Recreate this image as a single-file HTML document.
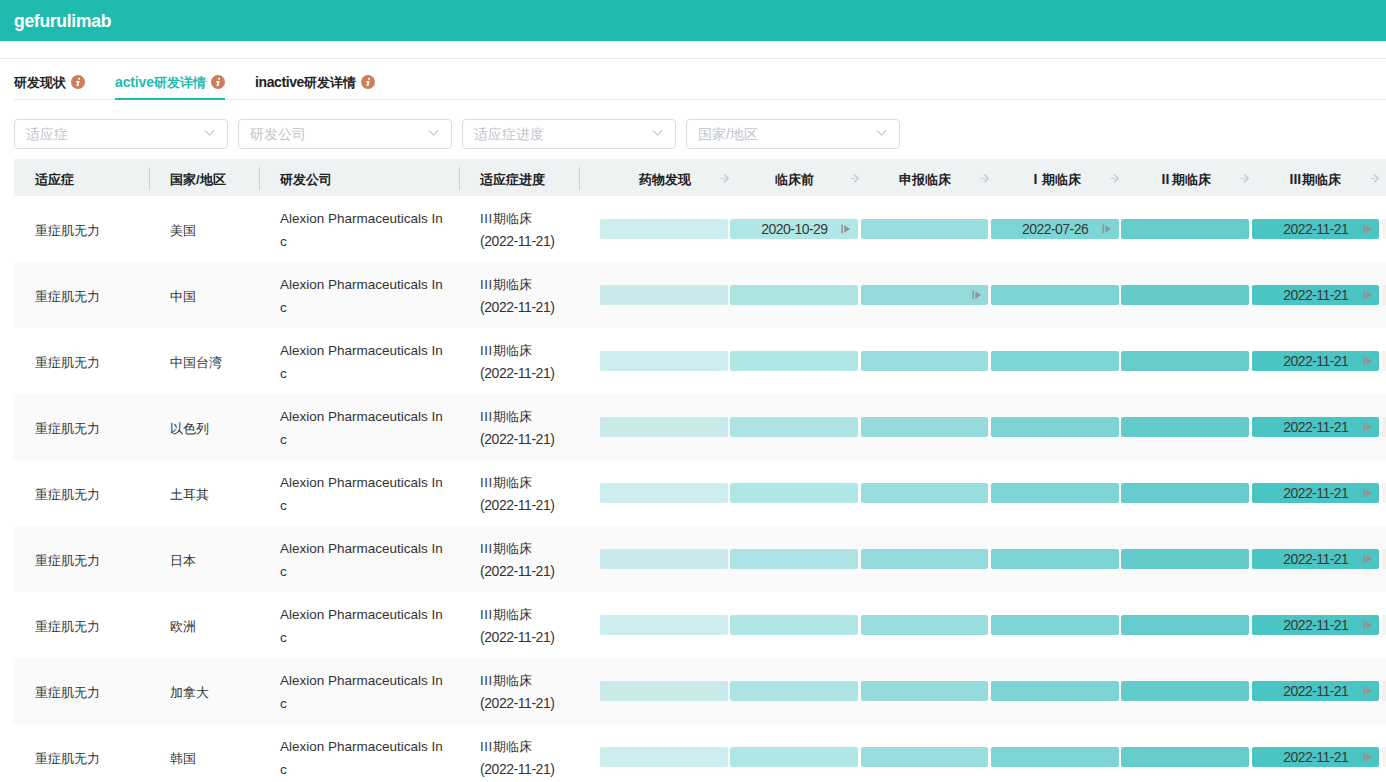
<!DOCTYPE html>
<html><head><meta charset="utf-8"><style>
*{box-sizing:border-box;margin:0;padding:0}
html,body{width:1386px;height:782px;overflow:hidden;background:#fff;font-family:"Liberation Sans",sans-serif;color:#333}
body{position:relative}
.a{position:absolute}
#hdr{left:0;top:0;width:1386px;height:41px;background:#1fbbae}
#ttl{position:absolute;left:14px;top:9px;letter-spacing:-0.28px;font-size:17.5px;font-weight:bold;color:#fff;line-height:24px;white-space:nowrap}
#l1{left:0;top:58px;width:1386px;height:1px;background:#e8e8e8}
#l2{left:14px;top:99px;width:1372px;height:1px;background:#e4e7ed}
.tab{position:absolute;top:74px;font-size:13px;font-weight:bold;line-height:18px;color:#222;white-space:nowrap}
.tab.act{color:#1fbbae}
.lt{font-size:14px;letter-spacing:-0.15px;line-height:0}
.info{position:absolute;top:75px;width:14px;height:14px}
.info svg{display:block}
#ul{left:115px;top:98px;width:110px;height:2px;background:#1fbbae}
.sel{position:absolute;top:119px;width:214px;height:30px;border:1px solid #dadde7;border-radius:4px}
.sel span{position:absolute;left:11px;top:5px;font-size:14px;line-height:18px;color:#c0c4cc;white-space:nowrap}
.sel svg{position:absolute;right:12.4px;top:10px;display:block}
#th{left:14px;top:159px;width:1372px;height:37px;background:#eef2f3;border-bottom:1px solid #ebeef5}
.hc{position:absolute;top:171px;font-size:13px;font-weight:bold;line-height:18px;color:#222;white-space:nowrap}
.dv{position:absolute;top:167px;width:1px;height:23px;background:#c3d4d2}
.arr{position:absolute;top:173px;width:10px;height:10px}
.arr svg,.pl svg{display:block}
.row{position:absolute;left:13px;width:1373px;height:66px}
.row.g{background:#fafafa}
.c{position:absolute;font-size:13px;line-height:18px;color:#333;white-space:nowrap}
.co{font-size:13.5px;line-height:23px}
.pr{line-height:23px}
.pd{font-size:14px;letter-spacing:-0.45px}
.rn{font-size:14px;top:170px}
.bar{position:absolute;height:20px;border-radius:2px}
.b0{background:rgba(40,185,185,0.24)}.b1{background:rgba(40,185,185,0.36)}.b2{background:rgba(40,185,185,0.48)}.b3{background:rgba(40,185,185,0.60)}.b4{background:rgba(40,185,185,0.72)}.b5{background:rgba(40,185,185,0.84)}.b6{background:rgba(0,0,0,0.045)}
.dt{font-size:14px;letter-spacing:-0.55px;color:#383838;text-align:center;text-indent:0.55px}
.pl{position:absolute;width:10px;height:10px}
</style></head><body>
<div id="hdr" class="a"><span id="ttl">gefurulimab</span></div>
<div id="l1" class="a"></div>
<div class="tab" style="left:14px">研发现状</div><div class="info" style="left:71px"><svg width="14" height="14" viewBox="0 0 14 14"><circle cx="7" cy="7" r="7" fill="#cd7e5b"/><circle cx="8.1" cy="3.7" r="1.05" fill="#fff"/><path d="M5.3 6.1H8.6L7.5 10.9H5.4L6.3 7.3H5.1Z" fill="#fff"/></svg></div>
<div class="tab act" style="left:115px"><span class="lt">active</span>研发详情</div><div class="info" style="left:211px"><svg width="14" height="14" viewBox="0 0 14 14"><circle cx="7" cy="7" r="7" fill="#cd7e5b"/><circle cx="8.1" cy="3.7" r="1.05" fill="#fff"/><path d="M5.3 6.1H8.6L7.5 10.9H5.4L6.3 7.3H5.1Z" fill="#fff"/></svg></div>
<div class="tab" style="left:255px"><span class="lt" style="letter-spacing:-0.4px">inactive</span>研发详情</div><div class="info" style="left:361px"><svg width="14" height="14" viewBox="0 0 14 14"><circle cx="7" cy="7" r="7" fill="#cd7e5b"/><circle cx="8.1" cy="3.7" r="1.05" fill="#fff"/><path d="M5.3 6.1H8.6L7.5 10.9H5.4L6.3 7.3H5.1Z" fill="#fff"/></svg></div>
<div id="l2" class="a"></div><div id="ul" class="a"></div>
<div class="sel" style="left:14px"><span>适应症</span><svg width="11" height="6" viewBox="0 0 11 6"><path d="M1 0.7 L5.5 5.1 L10 0.7" fill="none" stroke="#c0c4cc" stroke-width="1.1"/></svg></div>
<div class="sel" style="left:238px"><span>研发公司</span><svg width="11" height="6" viewBox="0 0 11 6"><path d="M1 0.7 L5.5 5.1 L10 0.7" fill="none" stroke="#c0c4cc" stroke-width="1.1"/></svg></div>
<div class="sel" style="left:462px"><span>适应症进度</span><svg width="11" height="6" viewBox="0 0 11 6"><path d="M1 0.7 L5.5 5.1 L10 0.7" fill="none" stroke="#c0c4cc" stroke-width="1.1"/></svg></div>
<div class="sel" style="left:686px"><span>国家/地区</span><svg width="11" height="6" viewBox="0 0 11 6"><path d="M1 0.7 L5.5 5.1 L10 0.7" fill="none" stroke="#c0c4cc" stroke-width="1.1"/></svg></div>
<div id="th" class="a"></div>
<div class="hc" style="left:35px">适应症</div>
<div class="hc" style="left:170px">国家/地区</div>
<div class="hc" style="left:280px">研发公司</div>
<div class="hc" style="left:480px">适应症进度</div>
<div class="dv" style="left:149px"></div>
<div class="dv" style="left:259px"></div>
<div class="dv" style="left:459px"></div>
<div class="dv" style="left:579px"></div>
<div class="hc" style="left:639px">药物发现</div>
<div class="hc" style="left:775px">临床前</div>
<div class="hc" style="left:899px">申报临床</div>
<div class="hc" style="left:1042px">期临床</div>
<div class="hc" style="left:1172px">期临床</div>
<div class="hc" style="left:1302px">期临床</div>
<div class="hc rn" style="left:1033.5px">I</div>
<div class="hc rn" style="left:1161.5px">II</div>
<div class="hc rn" style="left:1289.5px">III</div>
<div class="arr" style="left:719.9px"><svg width="10" height="10" viewBox="0 0 10 10"><path d="M0.6 5.4H5.2" stroke="#c6cad3" stroke-width="1" fill="none"/><path d="M4.2 1.5L8.1 5.4L4.2 9.3" fill="none" stroke="#c6cad3" stroke-width="1.6"/></svg></div>
<div class="arr" style="left:849.9px"><svg width="10" height="10" viewBox="0 0 10 10"><path d="M0.6 5.4H5.2" stroke="#c6cad3" stroke-width="1" fill="none"/><path d="M4.2 1.5L8.1 5.4L4.2 9.3" fill="none" stroke="#c6cad3" stroke-width="1.6"/></svg></div>
<div class="arr" style="left:979.9px"><svg width="10" height="10" viewBox="0 0 10 10"><path d="M0.6 5.4H5.2" stroke="#c6cad3" stroke-width="1" fill="none"/><path d="M4.2 1.5L8.1 5.4L4.2 9.3" fill="none" stroke="#c6cad3" stroke-width="1.6"/></svg></div>
<div class="arr" style="left:1109.9px"><svg width="10" height="10" viewBox="0 0 10 10"><path d="M0.6 5.4H5.2" stroke="#c6cad3" stroke-width="1" fill="none"/><path d="M4.2 1.5L8.1 5.4L4.2 9.3" fill="none" stroke="#c6cad3" stroke-width="1.6"/></svg></div>
<div class="arr" style="left:1239.9px"><svg width="10" height="10" viewBox="0 0 10 10"><path d="M0.6 5.4H5.2" stroke="#c6cad3" stroke-width="1" fill="none"/><path d="M4.2 1.5L8.1 5.4L4.2 9.3" fill="none" stroke="#c6cad3" stroke-width="1.6"/></svg></div>
<div class="arr" style="left:1369.9px"><svg width="10" height="10" viewBox="0 0 10 10"><path d="M0.6 5.4H5.2" stroke="#c6cad3" stroke-width="1" fill="none"/><path d="M4.2 1.5L8.1 5.4L4.2 9.3" fill="none" stroke="#c6cad3" stroke-width="1.6"/></svg></div>
<div class="row" style="top:196px"></div>
<div class="c" style="left:35px;top:222px">重症肌无力</div>
<div class="c" style="left:170px;top:222px">美国</div>
<div class="c co" style="left:280px;top:207px">Alexion Pharmaceuticals In<br>c</div>
<div class="c pr" style="left:480px;top:207px"><span style="letter-spacing:0.7px">III</span>期临床<br><span class="pd">(2022-11-21)</span></div>
<div class="bar b0" style="left:600.00px;top:219px;width:127.67px"></div>
<div class="bar b1" style="left:730.33px;top:219px;width:127.67px"></div>
<div class="bar b2" style="left:860.67px;top:219px;width:127.67px"></div>
<div class="bar b3" style="left:991.00px;top:219px;width:127.67px"></div>
<div class="bar b4" style="left:1121.33px;top:219px;width:127.67px"></div>
<div class="bar b5" style="left:1251.66px;top:219px;width:127.67px"></div>
<div class="bar b6" style="left:1382.00px;top:219px;width:127.67px"></div>
<div class="c dt" style="left:730.33px;width:127.67px;top:220px">2020-10-29</div>
<div class="c dt" style="left:991.00px;width:127.67px;top:220px">2022-07-26</div>
<div class="c dt" style="left:1251.66px;width:127.67px;top:220px">2022-11-21</div>
<div class="pl" style="left:841px;top:223.5px"><svg width="10" height="10" viewBox="0 0 10 10"><rect x="0.4" y="0.5" width="1.5" height="8.8" fill="#929292"/><path d="M3.3 1.3L9.0 5.0L3.3 8.7Z" fill="#929292"/></svg></div>
<div class="pl" style="left:1102px;top:223.5px"><svg width="10" height="10" viewBox="0 0 10 10"><rect x="0.4" y="0.5" width="1.5" height="8.8" fill="#929292"/><path d="M3.3 1.3L9.0 5.0L3.3 8.7Z" fill="#929292"/></svg></div>
<div class="pl" style="left:1363px;top:223.5px"><svg width="10" height="10" viewBox="0 0 10 10"><rect x="0.4" y="0.5" width="1.5" height="8.8" fill="#929292"/><path d="M3.3 1.3L9.0 5.0L3.3 8.7Z" fill="#929292"/></svg></div>
<div class="row g" style="top:262px"></div>
<div class="c" style="left:35px;top:288px">重症肌无力</div>
<div class="c" style="left:170px;top:288px">中国</div>
<div class="c co" style="left:280px;top:273px">Alexion Pharmaceuticals In<br>c</div>
<div class="c pr" style="left:480px;top:273px"><span style="letter-spacing:0.7px">III</span>期临床<br><span class="pd">(2022-11-21)</span></div>
<div class="bar b0" style="left:600.00px;top:285px;width:127.67px"></div>
<div class="bar b1" style="left:730.33px;top:285px;width:127.67px"></div>
<div class="bar b2" style="left:860.67px;top:285px;width:127.67px"></div>
<div class="bar b3" style="left:991.00px;top:285px;width:127.67px"></div>
<div class="bar b4" style="left:1121.33px;top:285px;width:127.67px"></div>
<div class="bar b5" style="left:1251.66px;top:285px;width:127.67px"></div>
<div class="bar b6" style="left:1382.00px;top:285px;width:127.67px"></div>
<div class="c dt" style="left:1251.66px;width:127.67px;top:286px">2022-11-21</div>
<div class="pl" style="left:972px;top:289.5px"><svg width="10" height="10" viewBox="0 0 10 10"><rect x="0.4" y="0.5" width="1.5" height="8.8" fill="#929292"/><path d="M3.3 1.3L9.0 5.0L3.3 8.7Z" fill="#929292"/></svg></div>
<div class="pl" style="left:1363px;top:289.5px"><svg width="10" height="10" viewBox="0 0 10 10"><rect x="0.4" y="0.5" width="1.5" height="8.8" fill="#929292"/><path d="M3.3 1.3L9.0 5.0L3.3 8.7Z" fill="#929292"/></svg></div>
<div class="row" style="top:328px"></div>
<div class="c" style="left:35px;top:354px">重症肌无力</div>
<div class="c" style="left:170px;top:354px">中国台湾</div>
<div class="c co" style="left:280px;top:339px">Alexion Pharmaceuticals In<br>c</div>
<div class="c pr" style="left:480px;top:339px"><span style="letter-spacing:0.7px">III</span>期临床<br><span class="pd">(2022-11-21)</span></div>
<div class="bar b0" style="left:600.00px;top:351px;width:127.67px"></div>
<div class="bar b1" style="left:730.33px;top:351px;width:127.67px"></div>
<div class="bar b2" style="left:860.67px;top:351px;width:127.67px"></div>
<div class="bar b3" style="left:991.00px;top:351px;width:127.67px"></div>
<div class="bar b4" style="left:1121.33px;top:351px;width:127.67px"></div>
<div class="bar b5" style="left:1251.66px;top:351px;width:127.67px"></div>
<div class="bar b6" style="left:1382.00px;top:351px;width:127.67px"></div>
<div class="c dt" style="left:1251.66px;width:127.67px;top:352px">2022-11-21</div>
<div class="pl" style="left:1363px;top:355.5px"><svg width="10" height="10" viewBox="0 0 10 10"><rect x="0.4" y="0.5" width="1.5" height="8.8" fill="#929292"/><path d="M3.3 1.3L9.0 5.0L3.3 8.7Z" fill="#929292"/></svg></div>
<div class="row g" style="top:394px"></div>
<div class="c" style="left:35px;top:420px">重症肌无力</div>
<div class="c" style="left:170px;top:420px">以色列</div>
<div class="c co" style="left:280px;top:405px">Alexion Pharmaceuticals In<br>c</div>
<div class="c pr" style="left:480px;top:405px"><span style="letter-spacing:0.7px">III</span>期临床<br><span class="pd">(2022-11-21)</span></div>
<div class="bar b0" style="left:600.00px;top:417px;width:127.67px"></div>
<div class="bar b1" style="left:730.33px;top:417px;width:127.67px"></div>
<div class="bar b2" style="left:860.67px;top:417px;width:127.67px"></div>
<div class="bar b3" style="left:991.00px;top:417px;width:127.67px"></div>
<div class="bar b4" style="left:1121.33px;top:417px;width:127.67px"></div>
<div class="bar b5" style="left:1251.66px;top:417px;width:127.67px"></div>
<div class="bar b6" style="left:1382.00px;top:417px;width:127.67px"></div>
<div class="c dt" style="left:1251.66px;width:127.67px;top:418px">2022-11-21</div>
<div class="pl" style="left:1363px;top:421.5px"><svg width="10" height="10" viewBox="0 0 10 10"><rect x="0.4" y="0.5" width="1.5" height="8.8" fill="#929292"/><path d="M3.3 1.3L9.0 5.0L3.3 8.7Z" fill="#929292"/></svg></div>
<div class="row" style="top:460px"></div>
<div class="c" style="left:35px;top:486px">重症肌无力</div>
<div class="c" style="left:170px;top:486px">土耳其</div>
<div class="c co" style="left:280px;top:471px">Alexion Pharmaceuticals In<br>c</div>
<div class="c pr" style="left:480px;top:471px"><span style="letter-spacing:0.7px">III</span>期临床<br><span class="pd">(2022-11-21)</span></div>
<div class="bar b0" style="left:600.00px;top:483px;width:127.67px"></div>
<div class="bar b1" style="left:730.33px;top:483px;width:127.67px"></div>
<div class="bar b2" style="left:860.67px;top:483px;width:127.67px"></div>
<div class="bar b3" style="left:991.00px;top:483px;width:127.67px"></div>
<div class="bar b4" style="left:1121.33px;top:483px;width:127.67px"></div>
<div class="bar b5" style="left:1251.66px;top:483px;width:127.67px"></div>
<div class="bar b6" style="left:1382.00px;top:483px;width:127.67px"></div>
<div class="c dt" style="left:1251.66px;width:127.67px;top:484px">2022-11-21</div>
<div class="pl" style="left:1363px;top:487.5px"><svg width="10" height="10" viewBox="0 0 10 10"><rect x="0.4" y="0.5" width="1.5" height="8.8" fill="#929292"/><path d="M3.3 1.3L9.0 5.0L3.3 8.7Z" fill="#929292"/></svg></div>
<div class="row g" style="top:526px"></div>
<div class="c" style="left:35px;top:552px">重症肌无力</div>
<div class="c" style="left:170px;top:552px">日本</div>
<div class="c co" style="left:280px;top:537px">Alexion Pharmaceuticals In<br>c</div>
<div class="c pr" style="left:480px;top:537px"><span style="letter-spacing:0.7px">III</span>期临床<br><span class="pd">(2022-11-21)</span></div>
<div class="bar b0" style="left:600.00px;top:549px;width:127.67px"></div>
<div class="bar b1" style="left:730.33px;top:549px;width:127.67px"></div>
<div class="bar b2" style="left:860.67px;top:549px;width:127.67px"></div>
<div class="bar b3" style="left:991.00px;top:549px;width:127.67px"></div>
<div class="bar b4" style="left:1121.33px;top:549px;width:127.67px"></div>
<div class="bar b5" style="left:1251.66px;top:549px;width:127.67px"></div>
<div class="bar b6" style="left:1382.00px;top:549px;width:127.67px"></div>
<div class="c dt" style="left:1251.66px;width:127.67px;top:550px">2022-11-21</div>
<div class="pl" style="left:1363px;top:553.5px"><svg width="10" height="10" viewBox="0 0 10 10"><rect x="0.4" y="0.5" width="1.5" height="8.8" fill="#929292"/><path d="M3.3 1.3L9.0 5.0L3.3 8.7Z" fill="#929292"/></svg></div>
<div class="row" style="top:592px"></div>
<div class="c" style="left:35px;top:618px">重症肌无力</div>
<div class="c" style="left:170px;top:618px">欧洲</div>
<div class="c co" style="left:280px;top:603px">Alexion Pharmaceuticals In<br>c</div>
<div class="c pr" style="left:480px;top:603px"><span style="letter-spacing:0.7px">III</span>期临床<br><span class="pd">(2022-11-21)</span></div>
<div class="bar b0" style="left:600.00px;top:615px;width:127.67px"></div>
<div class="bar b1" style="left:730.33px;top:615px;width:127.67px"></div>
<div class="bar b2" style="left:860.67px;top:615px;width:127.67px"></div>
<div class="bar b3" style="left:991.00px;top:615px;width:127.67px"></div>
<div class="bar b4" style="left:1121.33px;top:615px;width:127.67px"></div>
<div class="bar b5" style="left:1251.66px;top:615px;width:127.67px"></div>
<div class="bar b6" style="left:1382.00px;top:615px;width:127.67px"></div>
<div class="c dt" style="left:1251.66px;width:127.67px;top:616px">2022-11-21</div>
<div class="pl" style="left:1363px;top:619.5px"><svg width="10" height="10" viewBox="0 0 10 10"><rect x="0.4" y="0.5" width="1.5" height="8.8" fill="#929292"/><path d="M3.3 1.3L9.0 5.0L3.3 8.7Z" fill="#929292"/></svg></div>
<div class="row g" style="top:658px"></div>
<div class="c" style="left:35px;top:684px">重症肌无力</div>
<div class="c" style="left:170px;top:684px">加拿大</div>
<div class="c co" style="left:280px;top:669px">Alexion Pharmaceuticals In<br>c</div>
<div class="c pr" style="left:480px;top:669px"><span style="letter-spacing:0.7px">III</span>期临床<br><span class="pd">(2022-11-21)</span></div>
<div class="bar b0" style="left:600.00px;top:681px;width:127.67px"></div>
<div class="bar b1" style="left:730.33px;top:681px;width:127.67px"></div>
<div class="bar b2" style="left:860.67px;top:681px;width:127.67px"></div>
<div class="bar b3" style="left:991.00px;top:681px;width:127.67px"></div>
<div class="bar b4" style="left:1121.33px;top:681px;width:127.67px"></div>
<div class="bar b5" style="left:1251.66px;top:681px;width:127.67px"></div>
<div class="bar b6" style="left:1382.00px;top:681px;width:127.67px"></div>
<div class="c dt" style="left:1251.66px;width:127.67px;top:682px">2022-11-21</div>
<div class="pl" style="left:1363px;top:685.5px"><svg width="10" height="10" viewBox="0 0 10 10"><rect x="0.4" y="0.5" width="1.5" height="8.8" fill="#929292"/><path d="M3.3 1.3L9.0 5.0L3.3 8.7Z" fill="#929292"/></svg></div>
<div class="row" style="top:724px"></div>
<div class="c" style="left:35px;top:750px">重症肌无力</div>
<div class="c" style="left:170px;top:750px">韩国</div>
<div class="c co" style="left:280px;top:735px">Alexion Pharmaceuticals In<br>c</div>
<div class="c pr" style="left:480px;top:735px"><span style="letter-spacing:0.7px">III</span>期临床<br><span class="pd">(2022-11-21)</span></div>
<div class="bar b0" style="left:600.00px;top:747px;width:127.67px"></div>
<div class="bar b1" style="left:730.33px;top:747px;width:127.67px"></div>
<div class="bar b2" style="left:860.67px;top:747px;width:127.67px"></div>
<div class="bar b3" style="left:991.00px;top:747px;width:127.67px"></div>
<div class="bar b4" style="left:1121.33px;top:747px;width:127.67px"></div>
<div class="bar b5" style="left:1251.66px;top:747px;width:127.67px"></div>
<div class="bar b6" style="left:1382.00px;top:747px;width:127.67px"></div>
<div class="c dt" style="left:1251.66px;width:127.67px;top:748px">2022-11-21</div>
<div class="pl" style="left:1363px;top:751.5px"><svg width="10" height="10" viewBox="0 0 10 10"><rect x="0.4" y="0.5" width="1.5" height="8.8" fill="#929292"/><path d="M3.3 1.3L9.0 5.0L3.3 8.7Z" fill="#929292"/></svg></div>
</body></html>
